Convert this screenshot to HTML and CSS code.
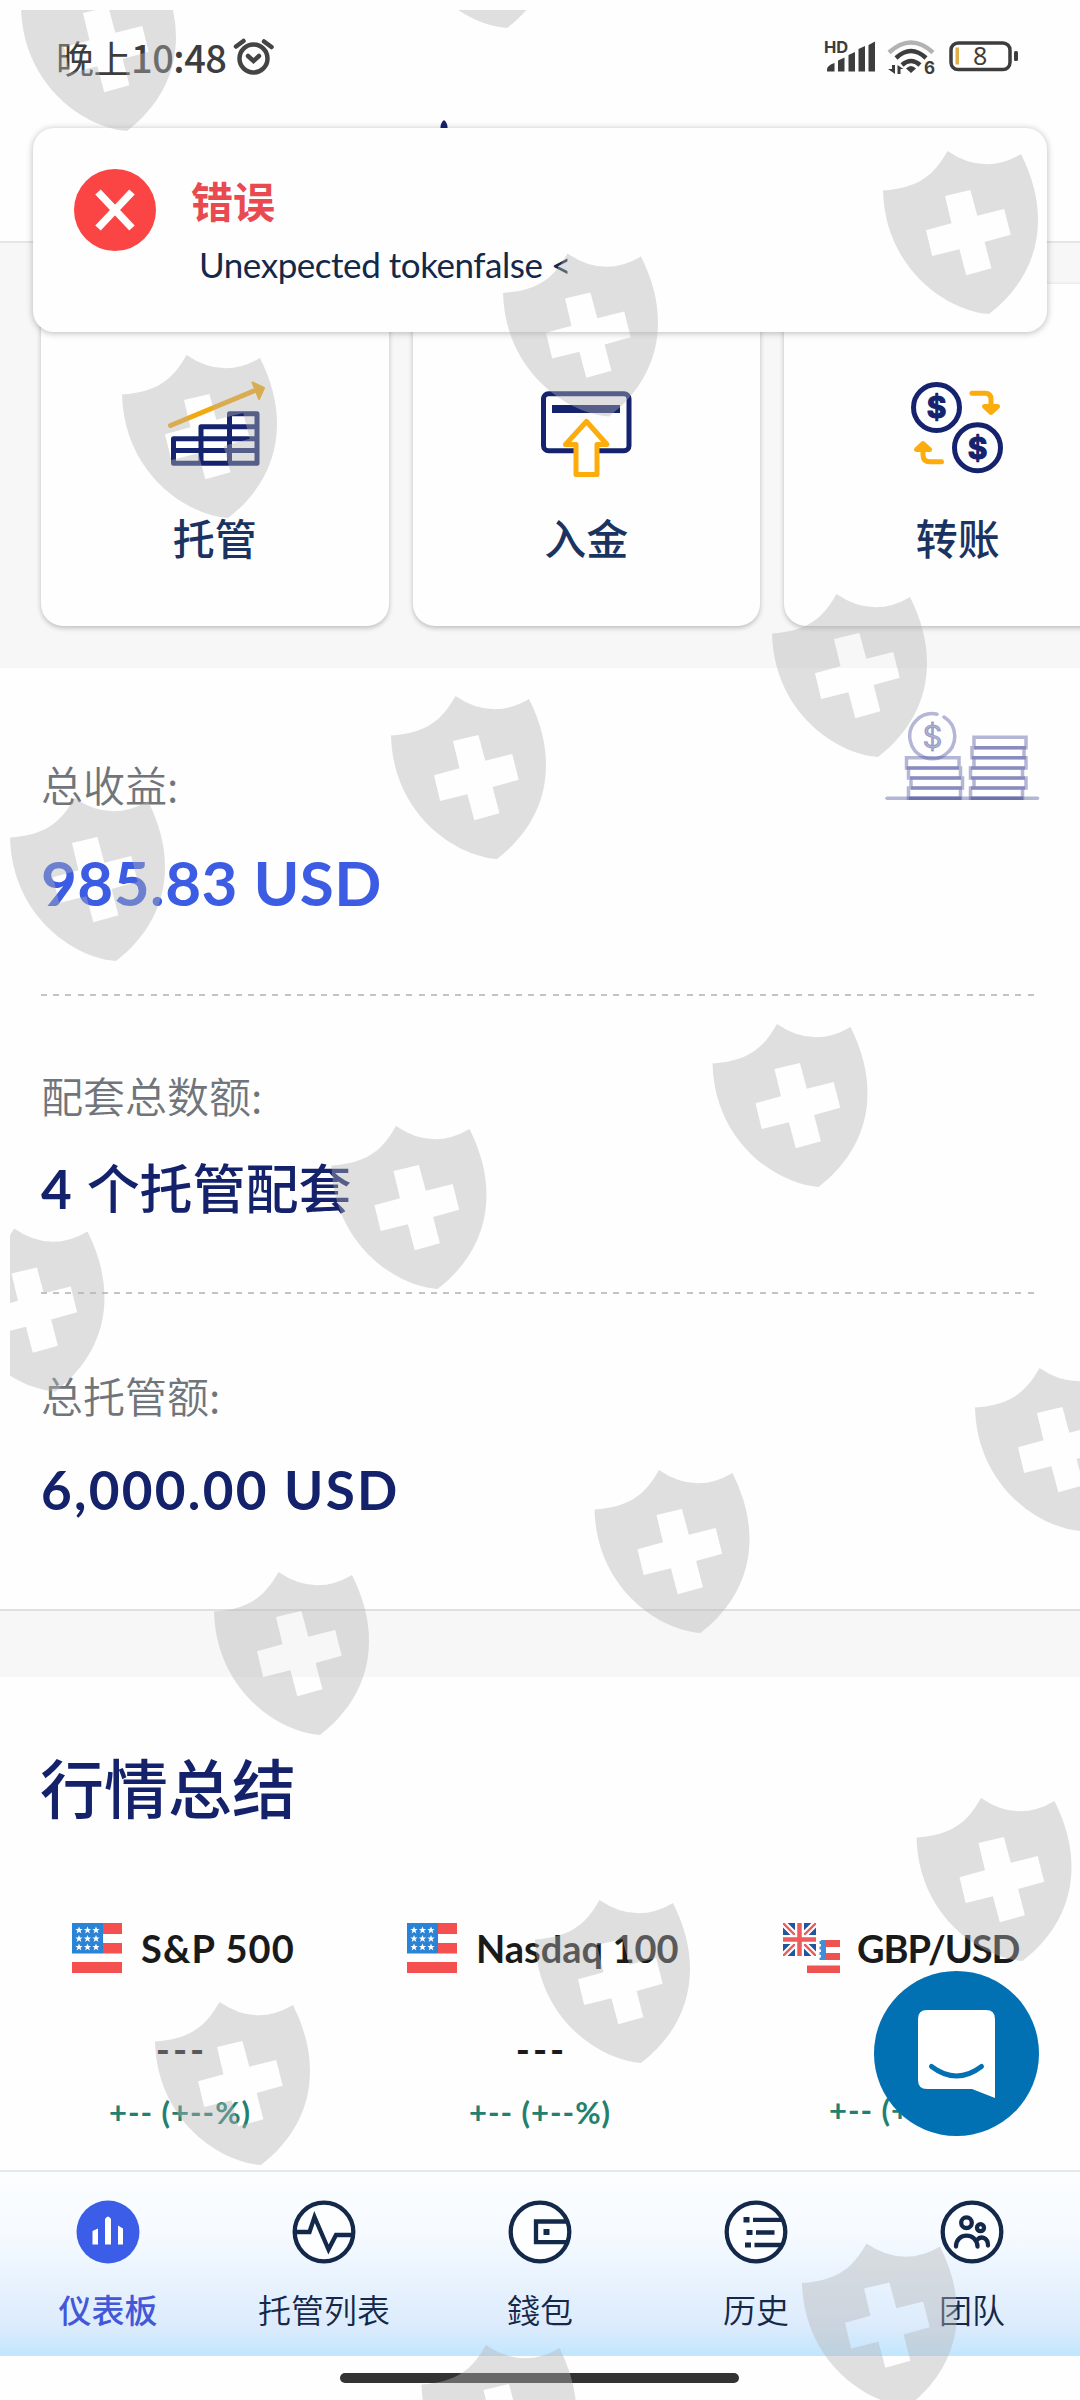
FILE: index.html
```html
<!DOCTYPE html>
<html lang="zh-CN">
<head>
<meta charset="utf-8">
<title>仪表板</title>
<link rel="stylesheet" href="styles.css">
</head>
<body>
<svg class="defs" width="0" height="0" aria-hidden="true">
  <defs>
    <symbol id="us-flag" viewBox="0 0 50 50">
      <path fill="#f55050" d="M31 0h19v11H31zM31 20h19v10.500H31zM0 39h50v11H0z"/>
      <path fill="#2b83d6" d="M0 0h31v30.500H0z"/>
      <g fill="#fff">
        <path id="star" d="M7 3.500l1 2.500h2.600l-2.100 1.700.9 2.700L7 8.800l-2.400 1.600.9-2.700L3.400 6H6z"/>
        <use href="#star" x="8.500"/><use href="#star" x="17"/>
        <use href="#star" y="8.500"/><use href="#star" x="8.500" y="8.500"/><use href="#star" x="17" y="8.500"/>
        <use href="#star" y="17"/><use href="#star" x="8.500" y="17"/><use href="#star" x="17" y="17"/>
      </g>
    </symbol>
    <path id="shield" fill-rule="evenodd" d="M0 39.500C36 37 51 24 64.500 0Q101 25 138 3Q155 37 155 69C155 108 136 140 106 163C64 160 2 118 0 39.500zM62 45L87.400 39L94.300 64.700L121.200 58L127.700 83.700L101.600 91L108.400 117.300L83.300 124.300L76.400 98.300L49.200 105L43 79.300L68.500 72.300z"/>
  </defs>
</svg>

<div class="screen">
  <header class="header">
    <div class="status">
      <div class="status-left">
        <span class="clock">晚上<b>10:48</b></span>
        <svg width="42" height="40" viewBox="232 37 42 40" fill="none" stroke="#444" stroke-width="4.500" stroke-linecap="round">
          <circle cx="253.500" cy="58.500" r="14"/>
          <path d="M236 46.500l7.500-5.500M264 41.500l7.500 5.500M248 56l5.500 5 5.500-5"/>
        </svg>
      </div>
      <svg width="200" height="40" viewBox="822 38 200 40" fill="#3d3d3d">
        <text class="hd" x="824" y="53.500">HD</text>
        <path d="M827 70.500q0-4 7.500-6.500v8.500H827zM838 61.500l6.500-3v14H838zM848.500 56l6.500-3v19.500h-6.500zM858.500 50l6.500-3v25.500h-6.500zM868.500 46l6.500-3.500v30h-6.500z"/>
        <g fill="none" stroke-width="4.500">
          <path stroke="#b3b3b3" d="M889 53.500q22-20 44 0"/>
          <path stroke="#3d3d3d" d="M896 59q15-14 30 0"/>
          <path stroke="#3d3d3d" d="M902 66q9-8 18 0"/>
        </g>
        <path d="M906 69.500q5-5 10 0l-5 4.500zM892 66h3v9l-7-5h4zM897.500 75v-9l6 4h-3v5z"/>
        <text class="six" x="924" y="75">6</text>
        <rect x="951" y="44" width="59" height="26.500" rx="7" fill="#fff" stroke="#3d3d3d" stroke-width="3.500"/>
        <rect x="955.500" y="48.500" width="3.500" height="17" fill="#dfae4b"/>
        <text class="charge" x="973" y="66">8</text>
        <rect x="1014" y="52" width="4" height="10" rx="1.500"/>
      </svg>
    </div>
    <svg class="brand" width="8" height="14" viewBox="0 0 8 14" fill="#14226e"><path d="M4 0q3.500 3 3.500 7v7h-7V7q0-4 3.500-7z"/></svg>
  </header>

  <section class="shortcuts">
    <a class="card">
      <svg width="104" height="100" viewBox="163 378 104 100" fill="none" stroke-linecap="round" stroke-linejoin="round">
        <g stroke="#15236e" stroke-width="5">
          <path d="M201 438.700h-27.500v24.600H201M173.500 450.500H201M201 463.300v-36.500h28.500v36.500zM201 438.700h28.500M201 450.500h28.500M229.500 463.300v-49.600H257v49.600zM229.500 426.800H257M229.500 438.700H257M229.500 450.500H257"/>
        </g>
        <path stroke="#f2a90f" stroke-width="5" d="M170.500 425.500L256 390"/>
        <path fill="#f2a90f" stroke="#f2a90f" stroke-width="2" d="M252.500 382.500l11.500 5.500-5 11z"/>
      </svg>
      <span>托管</span>
    </a>
    <a class="card">
      <svg width="104" height="100" viewBox="534 378 104 100" fill="none" stroke="#15236e" stroke-width="5" stroke-linejoin="round">
        <rect x="543.500" y="393.700" width="85.500" height="57" rx="5"/>
        <path stroke-width="8" d="M552 409h68"/>
        <path fill="#fff" stroke="#fcac0b" d="M586.500 421.500l20.500 23H597v30h-21v-30h-10.500z"/>
      </svg>
      <span>入金</span>
    </a>
    <a class="card">
      <svg width="104" height="100" viewBox="906 378 104 100" fill="none" stroke-linecap="round" stroke-linejoin="round">
        <g stroke="#15236e" stroke-width="5"><circle cx="936.500" cy="407.500" r="23"/><circle cx="977.500" cy="447.700" r="23"/></g>
        <g class="coin-sign" fill="#15236e"><text x="936.500" y="418">$</text><text x="977.500" y="458.500">$</text></g>
        <g stroke="#fcac0b" fill="#fcac0b" stroke-width="5">
          <path fill="none" d="M972 393.300h13q6 0 6 6V411M941.500 461.700H930q-7 0-7-7V445"/>
          <path d="M984.500 406.500h13l-6.500 6zM916.500 449.500h13l-6.500-6z"/>
        </g>
      </svg>
      <span>转账</span>
    </a>
  </section>

  <section class="summary">
    <div class="stat profit">
      <div class="label">总收益:</div>
      <div class="value">985.83 USD</div>
      <svg class="coins" width="155" height="92" viewBox="885 710 155 92" fill="none" stroke="#474a99" stroke-opacity=".4" stroke-width="3.500">
        <path stroke-linecap="round" d="M887 798.200h150.500"/>
        <path d="M906.500 757.700h52.500v10.300h-52.500zM908.500 768h52v10h-52zM911 778h51.500v10H911zM908.500 788h52v10.200h-52z"/>
        <path d="M974 737.300h52v10.400h-52zM972 747.700h52v10h-52zM974 757.700h52V768h-52zM970.500 768h52v10h-52zM974 778h52v10h-52zM970.500 788h52v10.200h-52z"/>
        <path d="M906.500 768h52.500M910 778h51M911 788h51M909 798.200h52M974 747.700h52M972 757.700h54M971 768h54M971 778h54M971 788h54M971 798.200h52"/>
        <path stroke-linecap="round" d="M937 714.200a22.500 22.500 0 1 0 7 2.800"/>
        <text class="coins-sign" x="932.500" y="748">$</text>
      </svg>
    </div>
    <div class="stat packages">
      <div class="label">配套总数额:</div>
      <div class="value">4 <span>个托管配套</span></div>
    </div>
    <div class="stat total">
      <div class="label">总托管额:</div>
      <div class="value">6,000.00 USD</div>
    </div>
  </section>

  <section class="markets">
    <h2>行情总结</h2>
    <div class="quotes">
      <div class="quote">
        <div class="name"><svg width="50" height="50"><use href="#us-flag"/></svg><span class="sp">S&amp;P 500</span></div>
        <div class="price">---</div>
        <div class="change">+-- (+--%)</div>
      </div>
      <div class="quote">
        <div class="name"><svg width="50" height="50"><use href="#us-flag"/></svg><span class="nq">Nasdaq 100</span></div>
        <div class="price">---</div>
        <div class="change">+-- (+--%)</div>
      </div>
      <div class="quote">
        <div class="name">
          <svg width="57" height="50" viewBox="0 0 57 50">
            <svg width="33" height="33" viewBox="0 0 33 33">
              <path fill="#20559f" d="M0 0h33v33H0z"/>
              <path stroke="#fff" stroke-width="6.500" d="M0 0l33 33M33 0L0 33"/>
              <path stroke="#ee5b5b" stroke-width="2.300" d="M0 0l33 33M33 0L0 33"/>
              <path stroke="#fff" stroke-width="9" d="M16.500 0v33M0 16.500h33"/>
              <path stroke="#ee5b5b" stroke-width="4.500" d="M16.500 0v33M0 16.500h33"/>
            </svg>
            <path fill="#ee5350" d="M43 17h14v7H43zM43 30h14v7H43zM24 42.500h33V50H24z"/>
            <path fill="#3f8fd8" d="M38 17h5v20h-5z"/>
            <path stroke="#3f8fd8" stroke-width="2" stroke-dasharray="3 2.500" d="M37.500 18v19"/>
          </svg><span class="gu">GBP/USD</span>
        </div>
        <div class="price">---</div>
        <div class="change">+-- (+--%)</div>
      </div>
    </div>
  </section>

  <nav class="tabs">
    <a class="tab active">
      <svg width="64" height="64" viewBox="-32 -32 64 64"><circle r="31.500" fill="#3b5de8"/><path fill="#fff" d="M-15.500 12.500V-1l5.500-2.500v16zM-3 12.500V-13q3-5 6 0v25.500zM10 12.500v-19l5 3v16z"/></svg>
      <span>仪表板</span>
    </a>
    <a class="tab">
      <svg width="64" height="64" viewBox="-32 -32 64 64"><circle r="29.300"/><path d="M-29 0h14.500l5-15L4.500 17.500 12 3h17"/></svg>
      <span>托管列表</span>
    </a>
    <a class="tab">
      <svg width="64" height="64" viewBox="-32 -32 64 64"><circle r="29.300"/><path d="M27-10.500H-4v20.700h31"/><path class="solid" d="M3.500-3h6v6h-6z"/></svg>
      <span>錢包</span>
    </a>
    <a class="tab">
      <svg width="64" height="64" viewBox="-32 -32 64 64"><circle r="29.300"/><path d="M-3-12.200h30M0 .5h18.500M-1.500 13H26"/><path class="solid" d="M-12.500-15h6v5.500h-6zM-9.500-2h6v5h-6zM-11 10.500h6v5h-6z"/></svg>
      <span>历史</span>
    </a>
    <a class="tab">
      <svg width="64" height="64" viewBox="-32 -32 64 64"><circle r="29.300"/><circle cx="-5.500" cy="-9.300" r="5.300"/><circle cx="8.500" cy="-4.300" r="3.500"/><path stroke-linecap="round" d="M-16 14.500C-16 0 5 0 5.500 14.500M5 8c4-5 11-2 11 5.500"/></svg>
      <span>团队</span>
    </a>
  </nav>
  <div class="home"><i></i></div>

  <div class="toast">
    <svg width="84" height="84" viewBox="-42 -42 84 84"><circle r="41" fill="#fb4444"/><path stroke="#fff" stroke-width="7.500" d="M-17-18L17 18M17-18L-17 18"/></svg>
    <div class="toast-text">
      <strong>错误</strong>
      <p>Unexpected tokenfalse &lt;</p>
    </div>
  </div>

  <button class="chat" aria-label="chat">
    <svg width="165" height="165" viewBox="874 1971 165 165"><path fill="#fff" d="M927 2010h59q9 0 9 9v79l-23-9h-45q-9 0-9-9v-61q0-9 9-9z"/><path fill="none" stroke="#0271b3" stroke-width="5" stroke-linecap="round" d="M931.500 2066.500q25 19 50 0"/></svg>
  </button>

  <svg class="watermark" width="1070" height="2390" viewBox="10 10 1070 2390" fill="#b4b4b4" fill-opacity=".41">
    <use href="#shield" x="21" y="-32"/><use href="#shield" x="401" y="-135"/>
    <use href="#shield" x="883" y="151"/><use href="#shield" x="503" y="253.500"/><use href="#shield" x="122" y="355"/>
    <use href="#shield" x="772" y="594"/><use href="#shield" x="391" y="696"/><use href="#shield" x="10" y="798"/>
    <use href="#shield" x="712.500" y="1024"/><use href="#shield" x="331.500" y="1126"/><use href="#shield" x="-50.500" y="1228.500"/>
    <use href="#shield" x="975" y="1368"/><use href="#shield" x="594.500" y="1470"/><use href="#shield" x="214" y="1572"/>
    <use href="#shield" x="916.500" y="1798"/><use href="#shield" x="535" y="1900"/><use href="#shield" x="155" y="2002"/>
    <use href="#shield" x="802" y="2243.500"/><use href="#shield" x="421.500" y="2345"/>
  </svg>
</div>
</body>
</html>
```
FILE: styles.css
```css
* { box-sizing: border-box; }

body {
  margin: 0;
  background: #fefefe;
  font-family: Lato, "Noto Sans CJK SC", sans-serif;
  color: #1a1a1a;
}

.defs { position: absolute; }
svg { display: block; flex: none; }

.screen {
  position: relative;
  width: 1080px;
  height: 2400px;
  overflow: hidden;
  display: flex;
  flex-direction: column;
}

/* header */
.header {
  height: 243px;
  border-bottom: 2px solid #e6e6e6;
  flex: none;
}
.status {
  height: 120px;
  padding: 37px 58px 0 56px;
  display: flex;
  justify-content: space-between;
}
.status-left { display: flex; }
.clock {
  width: 176px;
  font: 400 38px/40px "Noto Sans CJK SC", sans-serif;
  letter-spacing: -.5px;
  color: #3d3d3d;
  white-space: nowrap;
}
.clock b { font-weight: 500; }
.hd { font: 700 16.500px Inter, sans-serif; }
.six { font: 700 17px Inter, sans-serif; }
.charge { font: 400 25px "Noto Sans", sans-serif; }
.brand { margin-left: 440px; }

/* shortcut cards */
.shortcuts {
  height: 425px;
  flex: none;
  padding: 41px 0 42px 41px;
  display: flex;
  gap: 24px;
  background: #f7f7f7;
}
.card {
  flex: none;
  width: 347.500px;
  height: 342px;
  padding-top: 94px;
  border-radius: 22px;
  background: #fefefe;
  box-shadow: 0 2px 5px rgba(0, 0, 0, .24);
  display: flex;
  flex-direction: column;
  align-items: center;
}
.card span {
  margin-top: 29px;
  font: 500 42px/60px "Noto Sans CJK SC", sans-serif;
  color: #1b3360;
}
.coin-sign { font: 700 30px Inter, sans-serif; text-anchor: middle; stroke: #15236e; stroke-width: 1.200px; }

/* account totals */
.summary {
  height: 943px;
  flex: none;
  padding: 0 41px;
  border-bottom: 2px solid #e0e0e0;
}
.stat { position: relative; }
.profit, .packages {
  background: repeating-linear-gradient(90deg, #c4c4c4 0 6px, transparent 6px 12.180px) 0 100% / 100% 2px no-repeat;
}
.profit { height: 328px; padding-top: 86px; }
.packages { height: 298px; padding-top: 69px; }
.total { padding-top: 71px; }
.label {
  font: 350 42px/60px "Noto Sans CJK SC", sans-serif;
  color: #70757b;
}
.value {
  line-height: 76px;
  font-weight: 700;
  color: #14226b;
  white-space: nowrap;
}
.profit .value { margin-top: 30px; font-size: 62px; letter-spacing: .4px; color: #3b5ce3; }
.packages .value { margin-top: 26px; font-size: 53px; }
.packages .value span { margin-left: 2px; font-weight: 500; }
.total .value { margin-top: 27px; font-size: 53px; letter-spacing: 2.300px; }
.coins { position: absolute; right: -1px; top: 42px; }
.coins-sign { font: 400 31px Inter, sans-serif; text-anchor: middle; fill: #b1b2d4; stroke-width: 1px; }

/* market quotes */
.markets {
  height: 559px;
  flex: none;
  border-top: 66px solid #f7f7f7;
  padding-top: 68px;
}
h2 {
  margin: 0 0 0 40px;
  font: 500 64px/80px "Noto Sans CJK SC", sans-serif;
  color: #14226b;
}
.quotes { display: flex; margin-top: 98px; }
.quote { flex: none; width: 360px; }
.name { display: flex; gap: 19px; padding-left: 72px; height: 50px; }
.quote:nth-child(2) .name { padding-left: 47px; }
.quote:nth-child(3) .name { padding-left: 63px; gap: 17px; }
.name span { font-size: 38px; line-height: 51px; font-weight: 700; white-space: nowrap; }
.name .sp { letter-spacing: 1.100px; }
.name .gu { letter-spacing: -1.100px; }
.price { margin-top: 51px; font-size: 38px; line-height: 50px; font-weight: 700; text-align: center; letter-spacing: 3px; text-indent: 3px; }
.change { margin-top: 14px; font-size: 31px; line-height: 48px; font-weight: 700; letter-spacing: 1px; color: #23806f; text-align: center; white-space: nowrap; }
.quote:nth-child(3) .change { position: relative; top: -2px; }

/* bottom tabs */
.tabs {
  height: 186px;
  flex: none;
  display: flex;
  border-top: 2px solid #e6e8ee;
  background: linear-gradient(#fbfdff 0%, #f7fbff 30%, #eaf4fe 56%, #dcebfc 84%, #c1e6fe 100%);
}
.tab {
  flex: 1;
  padding-top: 28px;
  display: flex;
  flex-direction: column;
  align-items: center;
  font: 350 33px/48px "Noto Sans CJK SC", "Noto Sans CJK TC", sans-serif;
  color: #14284a;
}
.tab svg { fill: none; stroke: #14284a; stroke-width: 4.300px; }
.tab svg > circle:first-child { fill: #fdfeff; }
.tab .solid { fill: #14284a; stroke: none; }
.tab span { margin-top: 21px; }
.tab.active { color: #4258d8; font-weight: 500; }
.tab.active svg { stroke: none; }
.tab.active svg > circle:first-child { fill: #3b5de8; }

.home { height: 44px; padding-top: 17px; }
.home i { display: block; width: 399px; height: 10px; margin: 0 0 0 340px; border-radius: 5px; background: #333; }

/* overlays */
.toast {
  position: absolute;
  left: 33px;
  top: 128px;
  width: 1014px;
  height: 204px;
  padding: 40px;
  border-radius: 21px;
  background: #fefefe;
  box-shadow: 0 1px 7px rgba(0, 0, 0, .28);
  display: flex;
  gap: 34px;
}
.toast strong {
  display: block;
  margin-top: 2px;
  font: 700 42px/60px "Noto Sans CJK SC", sans-serif;
  color: #e84a50;
}
.toast p { margin: 9px 0 0 8px; font-size: 35px; letter-spacing: -.45px; line-height: 50px; color: #14284a; white-space: nowrap; }
.chat {
  position: absolute;
  left: 874px;
  top: 1971px;
  width: 165px;
  height: 165px;
  padding: 0;
  border: 0;
  border-radius: 50%;
  background: #0271b3;
}
.watermark { position: absolute; left: 10px; top: 10px; pointer-events: none; }
```
